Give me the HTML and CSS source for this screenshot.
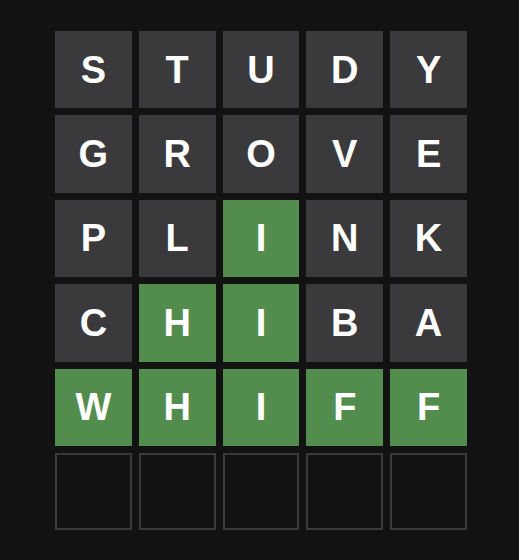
FILE: index.html
```html
<!DOCTYPE html>
<html>
<head>
<meta charset="utf-8">
<link rel="stylesheet" href="styles.css">
</head>
<body>
<div class="board">
  <div class="tile">S</div><div class="tile">T</div><div class="tile">U</div><div class="tile">D</div><div class="tile">Y</div>
  <div class="tile">G</div><div class="tile">R</div><div class="tile">O</div><div class="tile">V</div><div class="tile">E</div>
  <div class="tile">P</div><div class="tile">L</div><div class="tile correct">I</div><div class="tile">N</div><div class="tile">K</div>
  <div class="tile">C</div><div class="tile correct">H</div><div class="tile correct">I</div><div class="tile">B</div><div class="tile">A</div>
  <div class="tile correct">W</div><div class="tile correct">H</div><div class="tile correct">I</div><div class="tile correct">F</div><div class="tile correct">F</div>
  <div class="tile empty"></div><div class="tile empty"></div><div class="tile empty"></div><div class="tile empty"></div><div class="tile empty"></div>
</div>
</body>
</html>
```
FILE: styles.css
```css
html, body {
  margin: 0;
  padding: 0;
  background: #121213;
}
body {
  height: 560px;
  overflow: hidden;
}
.board {
  width: 412px;
  margin: 31px 0 0 55px;
  display: grid;
  grid-template-columns: repeat(5, 1fr);
  grid-template-rows: repeat(6, 77.4px);
  gap: 7px;
}
.tile {
  background: #3a3a3c;
  color: #ffffff;
  font-family: "Liberation Sans", Arial, sans-serif;
  font-weight: bold;
  font-size: 38px;
  display: flex;
  align-items: center;
  justify-content: center;
  box-sizing: border-box;
  line-height: 1;
}
.tile.correct {
  background: #538d4e;
}
.tile.empty {
  background: transparent;
  border: 2px solid #3a3a3c;
}
```
